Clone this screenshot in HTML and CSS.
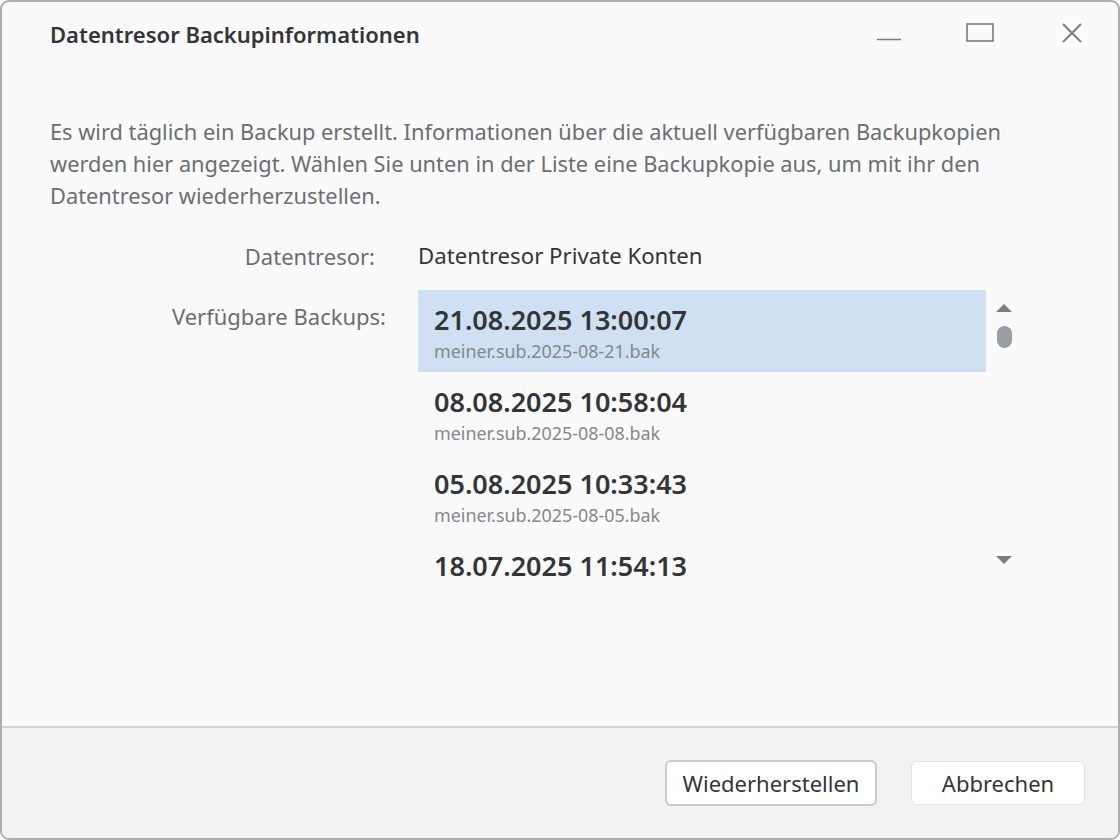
FILE: index.html
```html
<!DOCTYPE html>
<html lang="de">

<head>
  <meta charset="UTF-8">
  <meta name="viewport" content="width=device-width, initial-scale=1.0">
  <title>Datentresor Backupinformationen</title>
  <link rel="stylesheet" href="styles.css">
</head>

<body>
  <div class="window">
    <header class="titlebar">
      <h1 class="title">Datentresor Backupinformationen</h1>
      <div class="controls">
        <button class="ctrl min" aria-label="Minimieren">
          <svg width="26" height="20" viewBox="0 0 26 20"><line x1="1" y1="16.5" x2="25" y2="16.5" stroke="#777b80" stroke-width="1.5" /></svg>
        </button>
        <button class="ctrl max" aria-label="Maximieren">
          <svg width="28" height="20" viewBox="0 0 28 20"><rect x="1" y="1" width="26" height="17" fill="none" stroke="#777b80" stroke-width="1.6" /></svg>
        </button>
        <button class="ctrl close" aria-label="Schließen">
          <svg width="22" height="22" viewBox="0 0 22 22"><path d="M2 2 L20 20 M20 2 L2 20" stroke="#777b80" stroke-width="1.8" /></svg>
        </button>
      </div>
    </header>

    <main class="content">
      <p class="intro">
        Es wird täglich ein Backup erstellt. Informationen über die aktuell verfügbaren Backupkopien
        werden hier angezeigt. Wählen Sie unten in der Liste eine Backupkopie aus, um mit ihr den
        Datentresor wiederherzustellen.
      </p>

      <div class="form">
        <div class="row">
          <span class="label label-vault">Datentresor:</span>
          <span class="value">Datentresor Private Konten</span>
        </div>
        <div class="row">
          <span class="label label-list">Verfügbare Backups:</span>
          <div class="listwrap">
            <ul class="list">
              <li class="item selected">
                <div class="date">21.08.2025 13:00:07</div>
                <div class="file">meiner.sub.2025-08-21.bak</div>
              </li>
              <li class="item">
                <div class="date">08.08.2025 10:58:04</div>
                <div class="file">meiner.sub.2025-08-08.bak</div>
              </li>
              <li class="item">
                <div class="date">05.08.2025 10:33:43</div>
                <div class="file">meiner.sub.2025-08-05.bak</div>
              </li>
              <li class="item">
                <div class="date">18.07.2025 11:54:13</div>
              </li>
            </ul>
            <div class="scrollbar">
              <span class="arrow up"></span>
              <span class="thumb"></span>
              <span class="arrow down"></span>
            </div>
          </div>
        </div>
      </div>
    </main>

    <footer class="footer">
      <button class="btn primary">Wiederherstellen</button>
      <button class="btn">Abbrechen</button>
    </footer>
  </div>
</body>

</html>
```

FILE: styles.css
```css
html,
body {
  margin: 0;
  height: 100%;
}

body {
  background: #ffffff;
  font-family: "Noto Sans", "Open Sans", sans-serif;
  color: #333538;
}

.window {
  box-sizing: border-box;
  width: 1120px;
  height: 840px;
  border: 2px solid #adadad;
  border-radius: 9px;
  background: #fafafa;
  display: flex;
  flex-direction: column;
  overflow: hidden;
}

.titlebar {
  display: flex;
  align-items: center;
  justify-content: space-between;
  height: 68px;
  padding: 0 0 0 48px;
}

.title {
  margin: 0 0 4px 0;
  font-size: 22px;
  line-height: 30px;
  font-weight: 600;
  color: #333538;
}

.controls {
  display: flex;
  align-items: center;
  padding-bottom: 6px;
}

.ctrl {
  border: 0;
  background: none;
  padding: 0;
  display: flex;
  align-items: center;
  justify-content: center;
  height: 40px;
}

.min {
  width: 26px;
  margin-right: 64px;
}

.max {
  width: 28px;
  margin-right: 67px;
}

.close {
  width: 22px;
  margin-right: 35px;
}

.content {
  flex: 1;
  padding: 46px 48px 0 48px;
}

.intro {
  margin: 0;
  font-size: 21.8px;
  line-height: 32px;
  color: #6b6e72;
}

.form {
  margin-top: 29px;
}

.row {
  display: flex;
  align-items: flex-start;
}

.row + .row {
  margin-top: 19px;
}

.label {
  box-sizing: border-box;
  text-align: right;
  font-size: 22px;
  line-height: 30px;
  color: #6b6e72;
}

.label-vault {
  width: 325px;
  margin-right: 43px;
}

.label-list {
  width: 336px;
  margin-top: 11px;
  margin-right: 32px;
}

.value {
  font-size: 22.2px;
  line-height: 30px;
  color: #333538;
}

.listwrap {
  display: flex;
}

.list {
  list-style: none;
  margin: 0;
  padding: 0;
  width: 568px;
  height: 296px;
  overflow: hidden;
}

.item {
  box-sizing: border-box;
  height: 82px;
  padding: 13px 16px 0 16px;
}

.item.selected {
  background: #cfe0f2;
}

.date {
  font-size: 27px;
  font-weight: 600;
  line-height: 34px;
  color: #333538;
}

.file {
  font-size: 17.9px;
  line-height: 28px;
  color: #85888c;
}

.scrollbar {
  width: 36px;
  height: 296px;
  display: flex;
  flex-direction: column;
  align-items: center;
}

.arrow {
  width: 0;
  height: 0;
  border-left: 8px solid transparent;
  border-right: 8px solid transparent;
}

.arrow.up {
  margin-top: 14px;
  border-bottom: 8px solid #7a7d82;
}

.arrow.down {
  margin-top: auto;
  margin-bottom: 22px;
  border-top: 8px solid #7a7d82;
}

.thumb {
  margin-top: 14px;
  width: 15px;
  height: 22px;
  border-radius: 8px;
  background: #9a9da2;
}

.footer {
  height: 110px;
  border-top: 2px solid #d2d4d7;
  background: #f2f2f2;
  display: flex;
  align-items: center;
  justify-content: flex-end;
  padding: 0 33px 0 0;
  gap: 34px;
}

.btn {
  font-family: "Noto Sans", "Open Sans", sans-serif;
  font-size: 22px;
  color: #333538;
  background: #ffffff;
  border: 1px solid #e2e3e5;
  border-radius: 6px;
  height: 44px;
  padding: 0 14px;
  min-width: 174px;
}

.btn.primary {
  border: 2px solid #c9cacd;
  height: 46px;
  min-width: 212px;
}
```
